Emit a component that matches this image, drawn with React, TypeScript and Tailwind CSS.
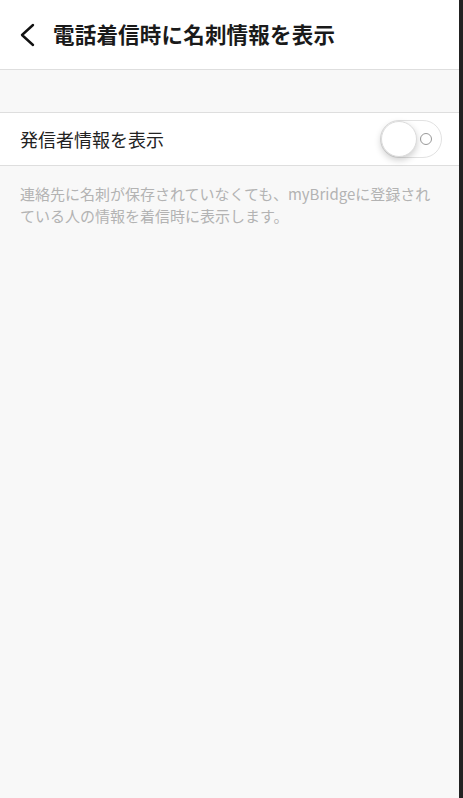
import { useState } from 'react';

const font = { fontFamily: '"Noto Sans CJK JP", "Noto Sans", sans-serif' };

function Toggle({ on, onChange }: { on: boolean; onChange: () => void }) {
  return (
    <button
      onClick={onChange}
      className={`relative flex h-[38px] w-[62px] items-center rounded-full border border-[#e2e2e2] ${on ? 'bg-[#4cd964]' : 'bg-white'}`}
    >
      <span className="absolute right-[9px] top-1/2 h-[12px] w-[12px] -translate-y-1/2 rounded-full border-[1.5px] border-[#999]" />
      <span
        className={`absolute top-[0px] h-[36px] w-[36px] rounded-full border border-[#dcdcdc] bg-white shadow-[0_3px_7px_rgba(0,0,0,0.2)] ${on ? 'left-[24px]' : 'left-[0px]'}`}
      />
    </button>
  );
}

export default function App() {
  const [on, setOn] = useState(false);
  return (
    <div className="flex h-[798px] w-[463px] bg-[#222]" style={font}>
      <div className="flex flex-1 flex-col bg-[#f8f8f8]">
        <header className="flex h-[70px] items-center gap-[18px] border-b border-[#dedede] bg-white pl-[19px]">
          <svg width="16" height="24" viewBox="0 0 16 24" fill="none" className="mt-[1px]">
            <path d="M14 2 L3 12 L14 22" stroke="#111" strokeWidth="2.4" strokeLinecap="round" strokeLinejoin="round" />
          </svg>
          <h1 className="text-[21.5px] font-semibold tracking-[0.2px] text-[#1a1a1a]">電話着信時に名刺情報を表示</h1>
        </header>
        <div className="h-[42px]" />
        <div className="flex h-[54px] items-center justify-between border-y border-[#dedede] bg-white pl-[20px] pr-[17px]">
          <span className="text-[18px] text-[#222]">発信者情報を表示</span>
          <Toggle on={on} onChange={() => setOn(!on)} />
        </div>
        <p className="px-[20px] pt-[17px] text-[15px] leading-[22px] text-[#b3b3b3]">
          連絡先に名刺が保存されていなくても、myBridgeに登録されている人の情報を着信時に表示します。
        </p>
      </div>
      <div className="w-[4px] shrink-0" />
    </div>
  );
}
